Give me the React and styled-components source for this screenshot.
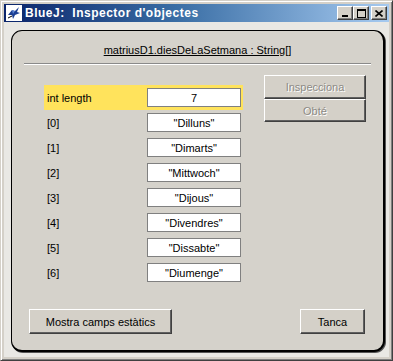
import React from "react";
import styled, { createGlobalStyle } from "styled-components";

const GlobalStyle = createGlobalStyle`
  html, body {
    margin: 0;
    padding: 0;
    background: #d4d0c8;
  }
  * {
    box-sizing: border-box;
  }
`;

const Window = styled.div`
  width: 393px;
  height: 361px;
  display: flex;
  flex-direction: column;
  padding: 2px;
  background: #d4d0c8;
  border-top: 1px solid #d4d0c8;
  border-left: 1px solid #d4d0c8;
  border-right: 1px solid #404040;
  border-bottom: 1px solid #404040;
  box-shadow: inset 1px 1px 0 #ffffff, inset -1px -1px 0 #808080;
  font-family: "Liberation Sans", Arial, sans-serif;
`;

const TitleBar = styled.div`
  height: 18px;
  margin: 1px 1px 0 1px;
  display: flex;
  align-items: center;
  padding: 0 2px 0 2px;
  background: linear-gradient(to right, #0a246a 0%, #3a6ea5 45%, #a6caf0 100%);
`;

const TitleIcon = styled.div`
  width: 16px;
  height: 16px;
  background: #ffffff;
  display: flex;
  align-items: center;
  justify-content: center;
`;

const TitleText = styled.span`
  margin-left: 3px;
  flex: 1;
  color: #ffffff;
  font-weight: bold;
  font-size: 12px;
  letter-spacing: 0.5px;
  white-space: pre;
`;

const TitleButtons = styled.div`
  display: flex;
`;

const CaptionButton = styled.div`
  width: 16px;
  height: 14px;
  margin-left: ${(p) => (p.$gap ? "2px" : "0")};
  background: #d4d0c8;
  border-top: 1px solid #ffffff;
  border-left: 1px solid #ffffff;
  border-right: 1px solid #404040;
  border-bottom: 1px solid #404040;
  box-shadow: inset -1px -1px 0 #808080;
  display: flex;
  align-items: center;
  justify-content: center;
`;

const Content = styled.div`
  flex: 1;
  margin: 0 1px 1px 1px;
  padding: 8px 4px 5px 7px;
  background: #e9e8e4;
  display: flex;
`;

const Panel = styled.div`
  flex: 1;
  display: flex;
  flex-direction: column;
  background: #d5d2cb;
  border: 1px solid #000000;
  border-right-width: 2px;
  border-bottom-width: 2px;
  border-radius: 11px;
  box-shadow: 1px 1px 0 #555555;
`;

const Header = styled.div`
  margin-top: 13px;
  text-align: center;
  font-size: 11px;
  line-height: 13px;
  color: #000000;
  text-decoration: underline;
`;

const Separator = styled.div`
  margin: 6px 12px 0 12px;
  height: 2px;
  border-top: 1px solid #8a8a8a;
  border-bottom: 1px solid #ffffff;
`;

const Body = styled.div`
  display: flex;
  padding-left: 32px;
  gap: 21px;
`;

const Fields = styled.div`
  width: 199px;
  margin-top: 20px;
  display: flex;
  flex-direction: column;
`;

const Row = styled.div`
  height: 25px;
  display: flex;
  align-items: center;
  padding: 0 2px 0 3px;
  background: ${(p) => (p.$selected ? "#ffe35c" : "transparent")};
`;

const Label = styled.span`
  width: 100px;
  font-size: 11px;
  color: #000000;
`;

const ValueBox = styled.div`
  width: 94px;
  height: 19px;
  background: #ffffff;
  border: 1px solid #808080;
  display: flex;
  align-items: center;
  justify-content: center;
  font-size: 11px;
  color: #000000;
`;

const Actions = styled.div`
  width: 102px;
  margin-top: 10px;
  display: flex;
  flex-direction: column;
`;

const Button = styled.div`
  width: ${(p) => p.$width}px;
  height: ${(p) => p.$height || 25}px;
  display: flex;
  align-items: center;
  justify-content: center;
  font-size: 11px;
  background: #d4d0c8;
  color: ${(p) => (p.$disabled ? "#8c8a85" : "#000000")};
  text-shadow: ${(p) => (p.$disabled ? "1px 1px 0 #ffffff" : "none")};
  border-top: 1px solid #ffffff;
  border-left: 1px solid #ffffff;
  border-right: 1px solid #404040;
  border-bottom: 1px solid #404040;
  box-shadow: inset -1px -1px 0 #606060;
`;

const Footer = styled.div`
  margin-top: auto;
  display: flex;
  justify-content: space-between;
  padding: 0 18px 16px 17px;
`;

const rows = [
  ["[0]", '"Dilluns"'],
  ["[1]", '"Dimarts"'],
  ["[2]", '"Mittwoch"'],
  ["[3]", '"Dijous"'],
  ["[4]", '"Divendres"'],
  ["[5]", '"Dissabte"'],
  ["[6]", '"Diumenge"'],
];

const BirdIcon = () => (
  <svg width="14" height="14" viewBox="0 0 14 14">
    <path d="M1 9 L5 4 L8 5 L12 1 L10 6 L13 7 L8 9 L6 13 L5 9 Z" fill="#1c3f94" />
    <path d="M5 4 L8 5 L6 8 Z" fill="#5d86d6" />
    <path d="M1 12 L5 10" stroke="#000" strokeWidth="1" />
  </svg>
);

const App = () => (
  <>
    <GlobalStyle />
    <Window>
      <TitleBar>
        <TitleIcon>
          <BirdIcon />
        </TitleIcon>
        <TitleText>{"BlueJ:  Inspector d'objectes"}</TitleText>
        <TitleButtons>
          <CaptionButton>
            <svg width="8" height="7" viewBox="0 0 8 7">
              <rect x="1" y="5" width="6" height="2" fill="#000" />
            </svg>
          </CaptionButton>
          <CaptionButton>
            <svg width="9" height="9" viewBox="0 0 9 9">
              <rect x="0.5" y="0.5" width="8" height="8" fill="none" stroke="#000" />
              <rect x="0" y="0" width="9" height="2" fill="#000" />
            </svg>
          </CaptionButton>
          <CaptionButton $gap>
            <svg width="8" height="7" viewBox="0 0 8 7">
              <path d="M0.5 0.5 L7.5 6.5 M7.5 0.5 L0.5 6.5" stroke="#000" strokeWidth="1.6" />
            </svg>
          </CaptionButton>
        </TitleButtons>
      </TitleBar>
      <Content>
        <Panel>
          <Header>matriusD1.diesDeLaSetmana : String[]</Header>
          <Separator />
          <Body>
            <Fields>
              <Row $selected>
                <Label>int length</Label>
                <ValueBox>7</ValueBox>
              </Row>
              {rows.map(([label, value]) => (
                <Row key={label}>
                  <Label>{label}</Label>
                  <ValueBox>{value}</ValueBox>
                </Row>
              ))}
            </Fields>
            <Actions>
              <Button $width={102} $height={24} $disabled>
                Inspecciona
              </Button>
              <Button $width={102} $height={23} $disabled>
                Obté
              </Button>
            </Actions>
          </Body>
          <Footer>
            <Button $width={143}>Mostra camps estàtics</Button>
            <Button $width={65}>Tanca</Button>
          </Footer>
        </Panel>
      </Content>
    </Window>
  </>
);

export default App;
